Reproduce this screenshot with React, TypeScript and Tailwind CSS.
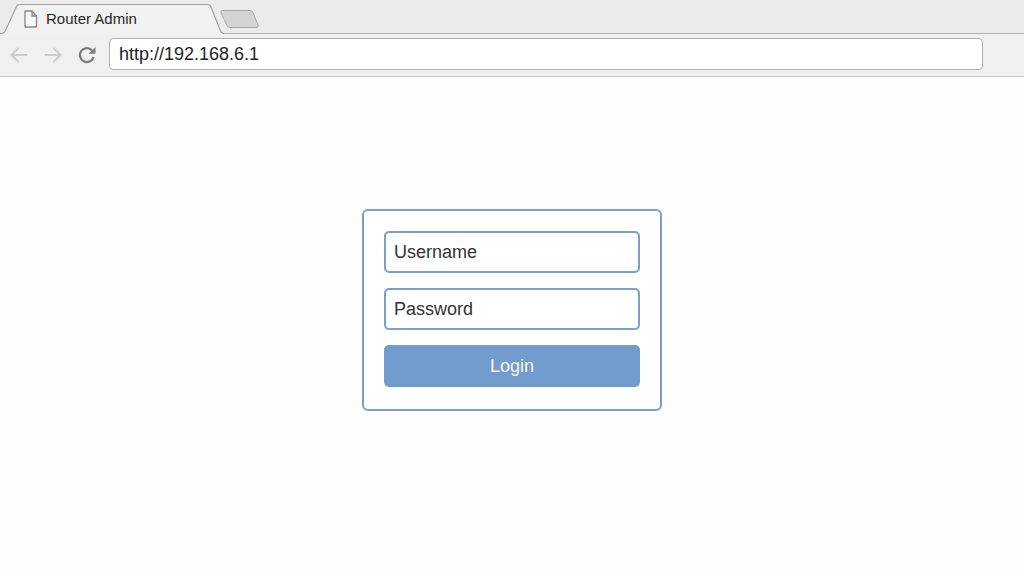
import { useState } from 'react'

function TabStrip() {
  return (
    <div className="flex h-[34px] bg-[#ebebeb]">
      <div className="relative w-[224px] shrink-0">
        <svg className="absolute inset-0" width="224" height="34" viewBox="0 0 224 34" aria-hidden="true">
          <path d="M0 33.5H1Q4 33.5 5 31.5L16.5 6.5Q17.5 4.5 20 4.5H207Q210 4.5 211 7L220.5 31Q221.5 33.5 224 33.5V34H0Z" fill="#f1f1f1" />
          <path d="M0 33.5H1Q4 33.5 5 31.5L16.5 6.5Q17.5 4.5 20 4.5H207Q210 4.5 211 7L220.5 31Q221.5 33.5 224 33.5" fill="none" stroke="#a2a2a2" strokeWidth="1.2" />
        </svg>
        <div className="relative flex items-center gap-2 pt-[7px] pl-6">
          <svg width="14" height="20" viewBox="0 0 14 20" fill="none" stroke="#858585" strokeWidth="1.3" strokeLinejoin="round" aria-hidden="true">
            <path d="M1 2H8L12.5 7V18H1Z" fill="#f8f8f8" />
            <path d="M8 2V7H12.5" />
          </svg>
          <span className="text-[15px] leading-6 text-[#262626]">Router Admin</span>
        </div>
      </div>
      <div className="flex-1 border-b border-[#b0b0b0]">
        <button type="button" aria-label="New tab" className="relative -ml-1 mt-[9px] block">
          <svg width="39" height="20" viewBox="0 0 39 20" aria-hidden="true">
            <path d="M3 1.5H30Q32 1.5 33 3.5L38 16Q39 18.5 36 18.5H10Q8 18.5 7 16.5L1 4Q0 1.5 3 1.5Z" fill="#d3d3d3" stroke="#aaaaaa" />
          </svg>
        </button>
      </div>
    </div>
  )
}

function Toolbar() {
  const [url, setUrl] = useState('http://192.168.6.1')

  return (
    <div className="flex h-[43px] items-start border-b border-[#c4c4c4] bg-[#f0f0f0] pt-1 pr-[41px] pl-[10px]">
      <div className="flex h-[34px] shrink-0 items-center gap-4">
        <button type="button" aria-label="Back">
          <svg width="18" height="18" viewBox="0 0 18 18" fill="none" stroke="#cdcdcd" strokeWidth="2">
            <path d="M17.5 9H2M8.5 2L1.5 9L8.5 16" />
          </svg>
        </button>
        <button type="button" aria-label="Forward">
          <svg width="18" height="18" viewBox="0 0 18 18" fill="none" stroke="#cdcdcd" strokeWidth="2">
            <path d="M0.5 9H16M9.5 2L16.5 9L9.5 16" />
          </svg>
        </button>
        <button type="button" aria-label="Reload">
          <svg width="18" height="18" viewBox="0 0 18 18">
            <path d="M14 4.2A7 7 0 1 0 15.6 11.2" fill="none" stroke="#7c7c7c" strokeWidth="2.3" />
            <path d="M17.5 1V7.8H10.5Z" fill="#7c7c7c" />
          </svg>
        </button>
      </div>
      <input
        type="text"
        aria-label="Address"
        value={url}
        onChange={e => setUrl(e.target.value)}
        className="ml-[13px] h-8 min-w-0 flex-1 rounded-[4px] border border-[#b0b0b0] bg-white px-[9px] text-[18px] text-[#1f1f1f] outline-none"
      />
    </div>
  )
}

const fieldClass =
  'h-[42px] w-full rounded-[5px] border-2 border-[#799fd2] bg-white px-2 text-[18px] text-[#333333] outline-none placeholder:text-[#333333] placeholder:opacity-100'

function LoginForm() {
  return (
    <form
      onSubmit={e => e.preventDefault()}
      className="flex w-full max-w-[300px] flex-col gap-[15px] rounded-[6px] border-2 border-[#799fd2] bg-white px-5 pt-5 pb-[22px]"
    >
      <input type="text" aria-label="Username" placeholder="Username" className={fieldClass} />
      <input type="password" aria-label="Password" placeholder="Password" className={fieldClass} />
      <button type="submit" className="h-[42px] rounded-[5px] bg-[#729bce] text-[18px] text-[#f5f8fc]">
        Login
      </button>
    </form>
  )
}

export default function App() {
  return (
    <div className="flex min-h-screen flex-col bg-[#fefefd] font-['Liberation_Sans',Arial,sans-serif]">
      <header>
        <TabStrip />
        <Toolbar />
      </header>
      <main className="flex flex-1 items-start justify-center px-4 pt-[132px] pb-8">
        <LoginForm />
      </main>
    </div>
  )
}
